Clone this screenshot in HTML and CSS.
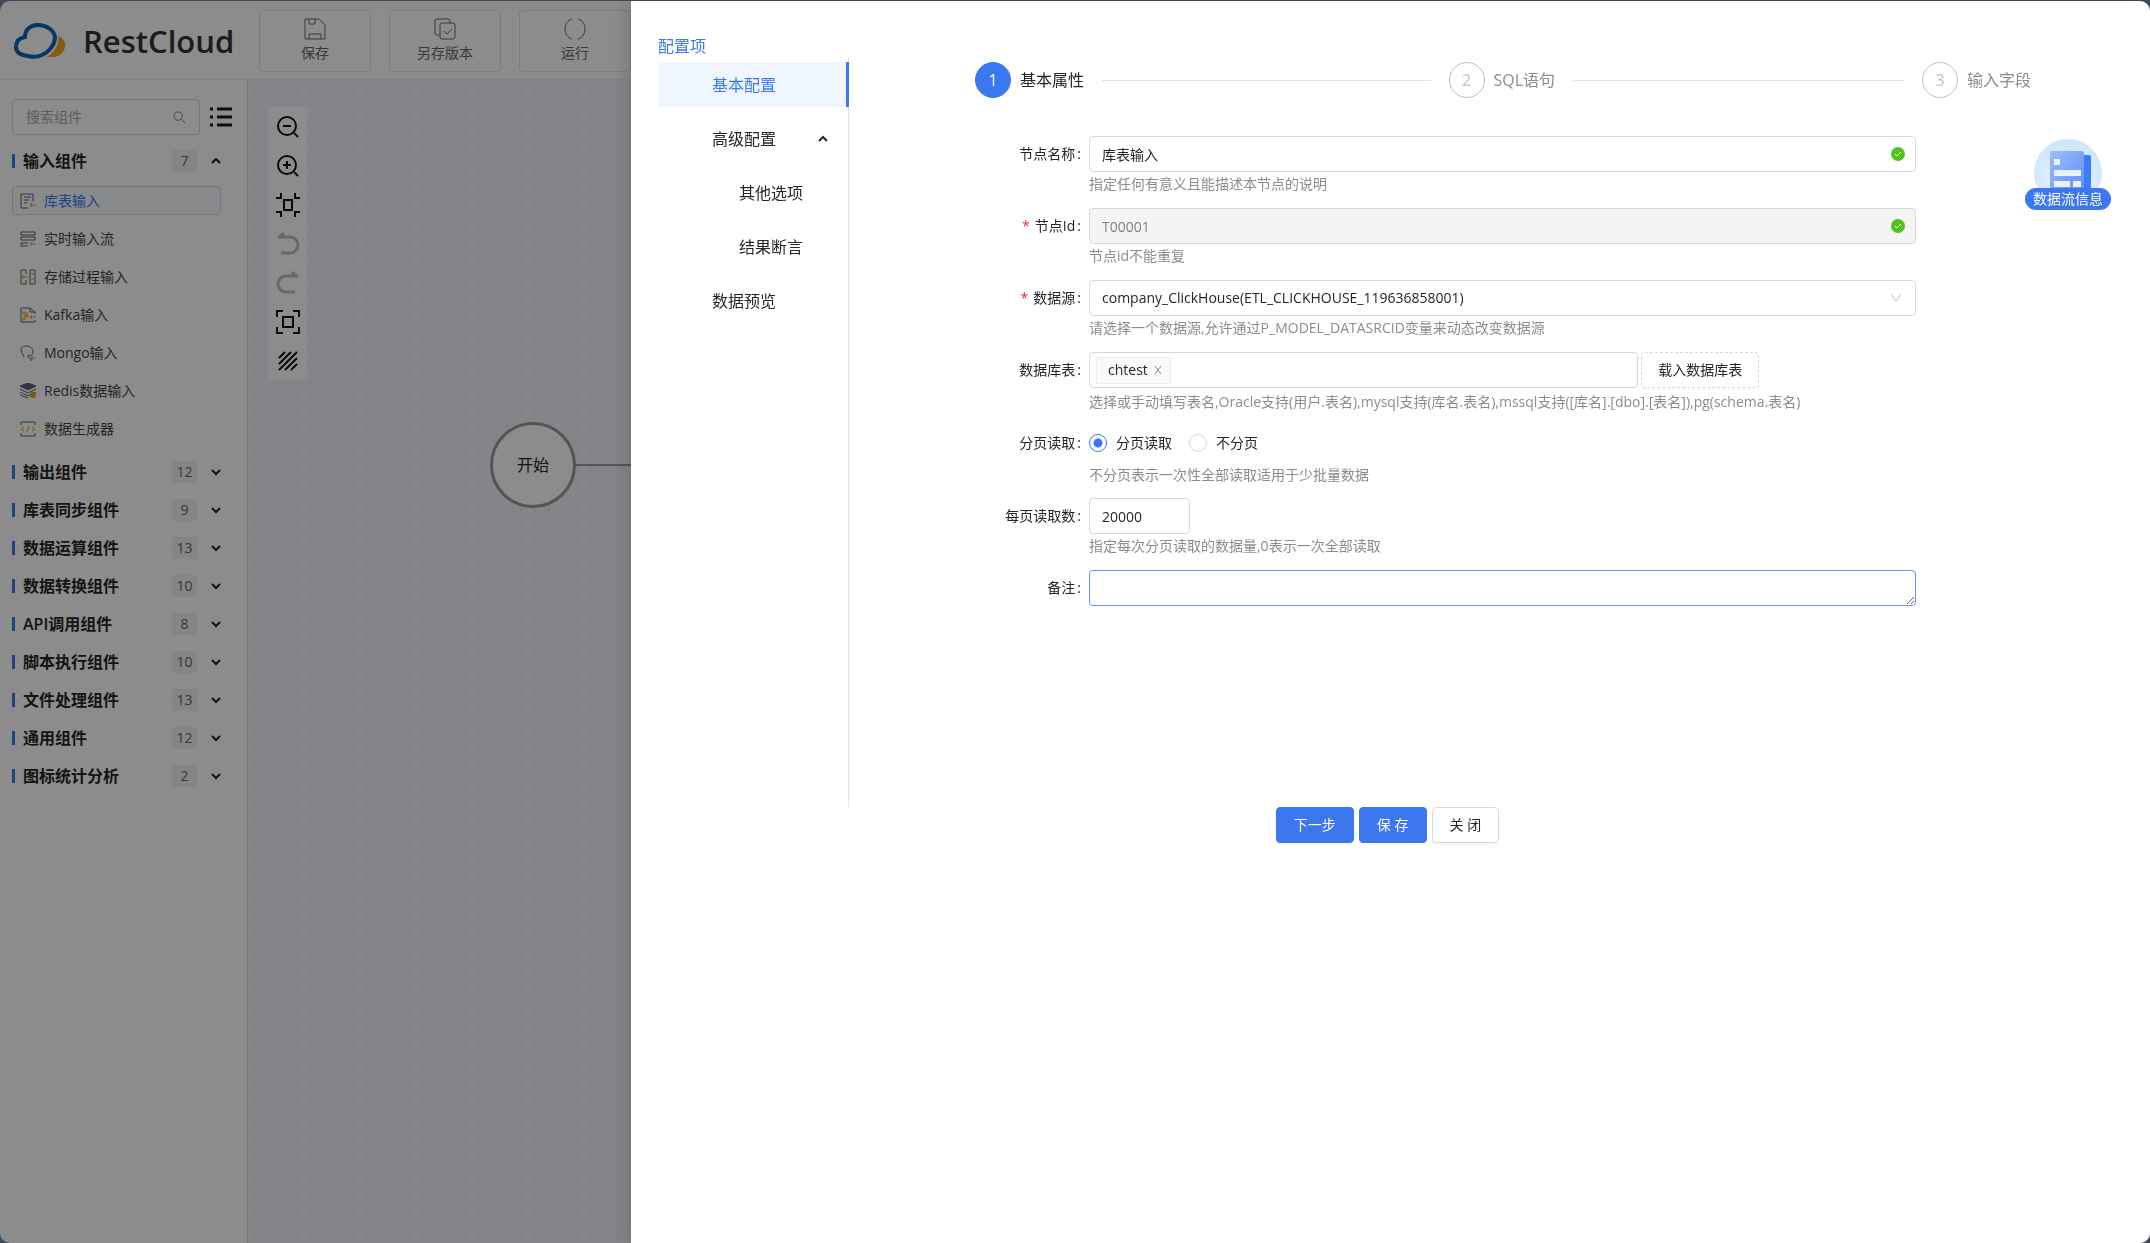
FILE: index.html
```html
<!DOCTYPE html>
<html lang="zh-CN">
<head>
<meta charset="utf-8">
<title>RestCloud</title>
<link rel="stylesheet" href="styles.css">
</head>
<body>
<div class="app">
  <header class="topbar">
    <div class="brand">
      <svg class="brand-mark" viewBox="0 0 54 38" aria-hidden="true">
        <path d="M43 13c7 2 10 7 9 12-1 6-6 10-12 10H28c8-2 15-9 15-22z" fill="#f0a81c"/>
        <path d="M13 15C12 7 18 2 26 2c9 0 16 5 17 13 0 10-7 18-15 19-5 2-10 2-14 1C6 34 2 30 2 25c0-5 4-9 11-10z" fill="#fff" stroke="#fff" stroke-width="5"/>
        <path d="M12 15C12 7 18 3 25 3c8 0 16 5 17 12 0 8-6 15-13 18-4 2-10 2-14 1C7 33 3 30 3 25c0-5 3-9 9-10z" fill="#fff" stroke="#0a66b8" stroke-width="4"/>
      </svg>
      <span class="brand-name">RestCloud</span>
    </div>
    <nav class="actions">
      <button class="action" type="button">
        <svg class="icon-lg" viewBox="0 0 22 22"><path d="M1 1h14l6 6v14H1zM5 1v5h6V1M5 21v-5h12v5"/></svg>
        <span>保存</span>
      </button>
      <button class="action" type="button">
        <svg class="icon-lg" viewBox="0 0 22 22"><path d="M5 17H3a2 2 0 0 1-2-2V3a2 2 0 0 1 2-2h11a2 2 0 0 1 2 2v2"/><rect x="6" y="5" width="15" height="16" rx="2"/><path d="M10 13l3 3 5-5"/></svg>
        <span>另存版本</span>
      </button>
      <button class="action" type="button">
        <svg class="icon-lg" viewBox="0 0 22 22"><path d="M8 1C4 2 1 6 1 11s3 9 7 10M14 1c4 1 7 5 7 10s-3 9-7 10"/></svg>
        <span>运行</span>
      </button>
    </nav>
  </header>
  <div class="workspace">
    <aside class="sidebar">
      <div class="search-row">
        <label class="search">
          <input type="text" placeholder="搜索组件" aria-label="搜索组件">
          <svg class="icon-search" viewBox="0 0 14 14"><circle cx="5.500" cy="5.500" r="4.500"/><path d="M9 9l4 4"/></svg>
        </label>
        <svg class="icon-list" viewBox="0 0 22 20"><path d="M0 2h3M7 2h15M0 10h3M7 10h15M0 18h3M7 18h15"/></svg>
      </div>
      <button class="group" type="button"><span class="group-name">输入组件</span><span class="count">7</span><svg class="chev" viewBox="0 0 10 10"><path d="M1 7l4-4 4 4"/></svg></button>
      <ul class="items">
        <li><a class="item item-active" href="#"><svg class="icon-sm" viewBox="0 0 16 16"><path d="M8 15H1V1h12v7M4 4h7M4 7h5M4 10h3"/><path class="accent" d="M16 12h-6M12 10l-2 2 2 2"/></svg>库表输入</a></li>
        <li><a class="item" href="#"><svg class="icon-sm" viewBox="0 0 16 16"><path d="M1 1h14v3H1zM1 6h14v3H1zM8 15H1v-3h7"/><path class="accent" d="M16 13h-6M12 11l-2 2 2 2"/></svg>实时输入流</a></li>
        <li><a class="item" href="#"><svg class="icon-sm" viewBox="0 0 16 16"><path d="M6 5V1H1v14h5v-4M10 1h5v14h-5z"/><path class="accent" d="M8 8H2M4 6L2 8l2 2M11 5h3M11 10h3"/></svg>存储过程输入</a></li>
        <li><a class="item" href="#"><svg class="icon-sm" viewBox="0 0 16 16"><path d="M15 13v2H1V1h9l5 4v2M10 1v4h5"/><path class="accent" d="M16 10h-6M12 8l-2 2 2 2M3 5h2v2H3zM5 8h3v2H5zM3 11h2v2H3zM7 5v2"/></svg>Kafka输入</a></li>
        <li><a class="item" href="#"><svg class="icon-sm" viewBox="0 0 16 16"><path d="M4 12C2 8 1 6 1 4c0-2 3-3 6-3s6 2 6 6c0 2-1 3-2 4-2-1-4-1-3 1s3 0 3 4"/><path class="accent" d="M16 13h-5M13 11l-2 2 2 2"/></svg>Mongo输入</a></li>
        <li><a class="item" href="#"><svg class="icon-sm" viewBox="0 0 16 16"><path class="solid" d="M8 0l8 3-8 4-8-4z"/><path d="M0 6l8 4 8-4M0 9l8 4 8-4M0 12l8 3"/><circle class="dot" cx="13" cy="12" r="3"/></svg>Redis数据输入</a></li>
        <li><a class="item" href="#"><svg class="icon-sm" viewBox="0 0 16 16"><path d="M1 4V1h14v3M1 12v3h14v-3"/><path class="accent" d="M4 6L1 8l3 2M12 6l3 2-3 2M9 5l-2 6"/></svg>数据生成器</a></li>
      </ul>
      <button class="group" type="button"><span class="group-name">输出组件</span><span class="count">12</span><svg class="chev" viewBox="0 0 10 10"><path d="M1 3l4 4 4-4"/></svg></button>
      <button class="group" type="button"><span class="group-name">库表同步组件</span><span class="count">9</span><svg class="chev" viewBox="0 0 10 10"><path d="M1 3l4 4 4-4"/></svg></button>
      <button class="group" type="button"><span class="group-name">数据运算组件</span><span class="count">13</span><svg class="chev" viewBox="0 0 10 10"><path d="M1 3l4 4 4-4"/></svg></button>
      <button class="group" type="button"><span class="group-name">数据转换组件</span><span class="count">10</span><svg class="chev" viewBox="0 0 10 10"><path d="M1 3l4 4 4-4"/></svg></button>
      <button class="group" type="button"><span class="group-name">API调用组件</span><span class="count">8</span><svg class="chev" viewBox="0 0 10 10"><path d="M1 3l4 4 4-4"/></svg></button>
      <button class="group" type="button"><span class="group-name">脚本执行组件</span><span class="count">10</span><svg class="chev" viewBox="0 0 10 10"><path d="M1 3l4 4 4-4"/></svg></button>
      <button class="group" type="button"><span class="group-name">文件处理组件</span><span class="count">13</span><svg class="chev" viewBox="0 0 10 10"><path d="M1 3l4 4 4-4"/></svg></button>
      <button class="group" type="button"><span class="group-name">通用组件</span><span class="count">12</span><svg class="chev" viewBox="0 0 10 10"><path d="M1 3l4 4 4-4"/></svg></button>
      <button class="group" type="button"><span class="group-name">图标统计分析</span><span class="count">2</span><svg class="chev" viewBox="0 0 10 10"><path d="M1 3l4 4 4-4"/></svg></button>
    </aside>
    <main class="canvas">
      <div class="tools">
        <button type="button" aria-label="缩小"><svg viewBox="0 0 24 24"><circle cx="11" cy="11" r="9"/><path d="M7 11h8M18 18l4 4"/></svg></button>
        <button type="button" aria-label="放大"><svg viewBox="0 0 24 24"><circle cx="11" cy="11" r="9"/><path d="M7 11h8M11 7v8M18 18l4 4"/></svg></button>
        <button type="button" aria-label="适应内容"><svg viewBox="0 0 24 24"><path d="M8 7h8v10H8zM0 5h5V0M24 5h-5V0M0 19h5v5M24 19h-5v5"/></svg></button>
        <button type="button" aria-label="撤销" disabled><svg viewBox="0 0 24 24"><path d="M2 5h12a8 8 0 0 1 0 16H5M8 1L3 5"/></svg></button>
        <button type="button" aria-label="重做" disabled><svg viewBox="0 0 24 24"><path d="M22 5H10a8 8 0 0 0 0 16h9M16 1l5 4"/></svg></button>
        <button type="button" aria-label="适应画布"><svg viewBox="0 0 24 24"><path d="M7 7h10v10H7zM1 7V1h6M17 1h6v6M1 17v6h6M17 23h6v-6"/></svg></button>
        <button type="button" aria-label="网格"><svg viewBox="0 0 24 24"><path d="M3 9l6-6M3 15L15 3M3 21L21 3M9 21L21 9M15 21l6-6"/></svg></button>
      </div>
      <div class="edge"></div>
      <div class="node">开始</div>
    </main>
  </div>
</div>

<div class="mask"></div>

<section class="drawer">
  <div class="drawer-body">
    <nav class="config">
      <h2 class="config-title">配置项</h2>
      <div class="menu">
        <a class="menu-item menu-active" href="#">基本配置</a>
        <a class="menu-item" href="#">高级配置<svg class="chev" viewBox="0 0 10 10"><path d="M1 7l4-4 4 4"/></svg></a>
        <a class="menu-item menu-sub" href="#">其他选项</a>
        <a class="menu-item menu-sub" href="#">结果断言</a>
        <a class="menu-item" href="#">数据预览</a>
      </div>
    </nav>
    <div class="content">
      <ol class="steps">
        <li class="step step-current"><span class="step-no">1</span><span class="step-title">基本属性</span></li>
        <li class="step"><span class="step-no">2</span><span class="step-title">SQL语句</span></li>
        <li class="step"><span class="step-no">3</span><span class="step-title">输入字段</span></li>
      </ol>
      <form class="form">
        <label class="label" for="name">节点名称</label>
        <div class="field">
          <div class="control"><input id="name" class="box" type="text" value="库表输入"><svg class="ok" viewBox="0 0 14 14"><circle cx="7" cy="7" r="7"/><path d="M4 7l2 2 4-4"/></svg></div>
          <p class="hint">指定任何有意义且能描述本节点的说明</p>
        </div>
        <label class="label required" for="nodeid">节点Id</label>
        <div class="field">
          <div class="control"><input id="nodeid" class="box" type="text" value="T00001" disabled><svg class="ok" viewBox="0 0 14 14"><circle cx="7" cy="7" r="7"/><path d="M4 7l2 2 4-4"/></svg></div>
          <p class="hint">节点id不能重复</p>
        </div>
        <label class="label required" for="source">数据源</label>
        <div class="field">
          <div class="control"><select id="source" class="box"><option>company_ClickHouse(ETL_CLICKHOUSE_119636858001)</option></select><svg class="arrow" viewBox="0 0 12 12"><path d="M1 2l5 7 5-7"/></svg></div>
          <p class="hint">请选择一个数据源,允许通过P_MODEL_DATASRCID变量来动态改变数据源</p>
        </div>
        <label class="label" for="tables">数据库表</label>
        <div class="field">
          <div class="table-row">
            <div class="box tags"><span class="tag">chtest<button type="button" class="tag-close" aria-label="移除"><svg viewBox="0 0 8 8"><path d="M1 0l6 8M7 0L1 8"/></svg></button></span><input id="tables" type="text"></div>
            <button class="btn btn-dashed" type="button">载入数据库表</button>
          </div>
          <p class="hint hint-loose">选择或手动填写表名,Oracle支持(用户.表名),mysql支持(库名.表名),mssql支持([库名].[dbo].[表名]),pg(schema.表名)</p>
        </div>
        <span class="label">分页读取</span>
        <div class="field">
          <div class="radios">
            <label><input type="radio" name="paging" checked>分页读取</label>
            <label><input type="radio" name="paging">不分页</label>
          </div>
          <p class="hint hint-loose">不分页表示一次性全部读取适用于少批量数据</p>
        </div>
        <label class="label" for="size">每页读取数</label>
        <div class="field">
          <input id="size" class="box box-short" type="text" value="20000">
          <p class="hint">指定每次分页读取的数据量,0表示一次全部读取</p>
        </div>
        <label class="label" for="remark">备注</label>
        <div class="field"><textarea id="remark" class="box remark" rows="1"></textarea></div>
      </form>
    </div>
  </div>
  <footer class="footer">
    <button class="btn btn-primary" type="button">下一步</button>
    <button class="btn btn-primary" type="button">保 存</button>
    <button class="btn" type="button">关 闭</button>
  </footer>
  <button class="info" type="button">
    <svg viewBox="0 0 68 68" aria-hidden="true">
      <defs>
        <radialGradient id="halo" cx="50%" cy="60%" r="55%"><stop offset="0" stop-color="#f0f4ff"/><stop offset="1" stop-color="#cfe6ff"/></radialGradient>
        <linearGradient id="sheet" x1="0" y1="0" x2="1" y2="1"><stop offset="0" stop-color="#9dbcfb"/><stop offset="1" stop-color="#5c8ff8"/></linearGradient>
      </defs>
      <circle cx="34" cy="34" r="34" fill="url(#halo)"/>
      <rect x="46" y="16" width="11" height="40" rx="2" fill="#3f7bf8"/>
      <rect x="16" y="12" width="34" height="44" rx="2" fill="url(#sheet)"/>
      <path d="M20 20h6v6h-6zM20 31h27v6H20zM20 42h16v6H20zM39 42h8v6h-8z" fill="#e9f0ff"/>
    </svg>
    <span>数据流信息</span>
  </button>
</section>
</body>
</html>
```
FILE: styles.css
```css
* { box-sizing: border-box; }

:root {
  --primary: #3b78f0;
  --text: #262626;
  --muted: #8c8c8c;
  --line: #d9d9d9;
}

html { height: 100%; background: #75879f; }

body {
  margin: 0;
  min-height: 100%;
  font: 14px/22px "Open Sans", "Noto Sans CJK SC", sans-serif;
  color: var(--text);
}

button, input, select, textarea { font: inherit; color: inherit; }
button { padding: 0; border: 0; background: none; }
a { color: inherit; text-decoration: none; }
ul, ol, p, h2 { margin: 0; padding: 0; list-style: none; }
svg { flex: none; fill: none; stroke: currentColor; }

/* Designer behind the drawer */
.app {
  display: flex;
  flex-direction: column;
  min-height: calc(100vh - 1px);
  margin-top: 1px;
  border-radius: 10px;
  background: #fff;
  overflow: hidden;
}

.topbar {
  display: flex;
  align-items: center;
  gap: 24px;
  height: 79px;
  padding: 2px 0 0 13px;
  border-bottom: 1px solid #eef0f4;
}

.brand { display: flex; align-items: center; gap: 16px; width: 222px; }
.brand-mark { width: 54px; height: 38px; stroke: none; }
.brand-name { font: 600 31px/40px "Open Sans", sans-serif; color: #333; }

.actions { display: flex; gap: 18px; }
.action {
  display: flex;
  flex-direction: column;
  align-items: center;
  justify-content: center;
  gap: 2px;
  width: 112px;
  height: 62px;
  border: 1px solid #dbe6fa;
  border-radius: 4px;
  color: #666;
}
.icon-lg { width: 22px; height: 22px; }

.workspace { display: flex; flex: 1; }

.sidebar {
  width: 248px;
  padding: 19px 26px 0 12px;
  border-right: 1px solid #d5d5d5;
}

.search-row { display: flex; align-items: center; gap: 10px; margin-right: -12px; margin-bottom: 7px; }
.search {
  display: flex;
  align-items: center;
  width: 188px;
  height: 36px;
  padding: 0 13px;
  border: 1px solid var(--line);
  border-radius: 4px;
}
.search input { flex: 1; min-width: 0; padding: 0; border: 0; background: none; }
.search input::placeholder { color: #aaa; }
.icon-search { width: 13px; height: 13px; color: #777; }
.icon-list { width: 22px; height: 20px; stroke: #1d1d1d; stroke-width: 3; }

.group { display: flex; align-items: center; width: 100%; height: 38px; }
.group::before { content: ""; width: 3px; height: 14px; margin-right: 8px; background: var(--primary); }
.group-name { flex: 1; font-size: 16px; font-weight: 600; text-align: left; }
.count { width: 25px; margin-right: 14px; background: #f2f2f2; color: #666; text-align: center; }
.chev { width: 10px; height: 10px; stroke: #222; stroke-width: 2; }

.items { display: grid; gap: 9px; padding: 6px 0 10px; }
.item {
  display: flex;
  align-items: center;
  gap: 8px;
  height: 29px;
  padding-left: 7px;
  border: 1px solid transparent;
  border-radius: 4px;
  color: #444;
}
.item-active { border-color: #c3dafa; background: #f8fbff; color: var(--primary); }
.icon-sm { width: 16px; height: 16px; stroke: #59626d; }
.icon-sm .accent { stroke: #f09a12; }
.icon-sm .solid { fill: #59626d; }
.icon-sm .dot { fill: #f09a12; stroke: none; }

.canvas {
  position: relative;
  flex: 1;
  background: #f1f3fa radial-gradient(circle, #e3e5ec 1px, transparent 2px) 0 3px / 14px 14px;
}
.tools { position: absolute; top: 27px; left: 20px; display: grid; width: 39px; background: #fff; }
.tools button { display: grid; place-items: center; height: 39px; color: #111; }
.tools button:disabled { color: #b9c0cd; }
.tools svg { width: 24px; height: 24px; stroke-width: 2; }
.tools button:disabled svg { stroke-width: 3; }
.node {
  position: absolute;
  top: 342px;
  left: 242px;
  width: 86px;
  height: 86px;
  border: 3px solid #999;
  border-radius: 50%;
  background: #fff;
  font-size: 16px;
  line-height: 80px;
  text-align: center;
}
.edge { position: absolute; top: 384px; left: 328px; right: 0; height: 2px; background: #999; }

.mask { position: fixed; inset: 0; background: rgba(0, 0, 0, .45); }

/* Configuration drawer */
.drawer {
  position: absolute;
  top: 1px;
  left: 631px;
  right: 0;
  min-height: calc(100vh - 1px);
  padding: 0 33px 0 27px;
  border-radius: 0 10px 10px 0;
  background: #fff;
  box-shadow: -6px 0 16px rgba(0, 0, 0, .12);
}
.drawer-body { display: flex; }

.config { display: flex; flex-direction: column; width: 191px; padding-top: 34px; }
.config-title { font-size: 16px; font-weight: 400; line-height: 22px; color: var(--primary); }
.menu { display: grid; align-content: start; gap: 9px; min-height: 750px; padding-top: 5px; border-right: 1px solid #e3e3e3; }
.menu-item {
  display: flex;
  align-items: center;
  justify-content: space-between;
  height: 45px;
  padding: 0 20px 0 54px;
  font-size: 16px;
}
.menu-sub { padding-left: 81px; }
.menu-active { margin-right: -1px; border-right: 3px solid var(--primary); background: #eff6ff; color: var(--primary); }

.content { flex: 1; padding: 61px 0 0 126px; }

.steps { display: flex; gap: 18px; margin-right: 86px; }
.step { display: flex; flex: 1; align-items: center; gap: 9px; font-size: 16px; color: var(--muted); }
.step:last-child { flex: none; }
.step:not(:last-child)::after { content: ""; flex: 1; height: 1px; margin-left: 9px; background: #e3e3e3; }
.step-no { width: 36px; height: 36px; border: 1px solid #bfbfbf; border-radius: 50%; line-height: 34px; text-align: center; color: #bfbfbf; }
.step-current { color: var(--text); }
.step-current .step-no { border-color: var(--primary); background: var(--primary); color: #fff; }

.form {
  display: grid;
  grid-template-columns: 106px 1fr;
  column-gap: 8px;
  row-gap: 12px;
  margin: 38px 201px 0 0;
}
.label { line-height: 36px; text-align: right; white-space: nowrap; }
.label::after { content: ":"; margin-left: 2px; }
.required::before { content: "*"; margin-right: 5px; color: #f5222d; }
.control { position: relative; }
.box {
  display: block;
  width: 100%;
  height: 36px;
  padding: 0 12px;
  border: 1px solid var(--line);
  border-radius: 4px;
  background: #fff;
  outline: 0;
  appearance: none;
}
.box:disabled { background: #f4f4f4; color: #808080; }
.box-short { width: 101px; }
.ok { position: absolute; top: 11px; right: 11px; width: 14px; height: 14px; fill: #52c41a; stroke: none; }
.ok path { fill: none; stroke: #fff; }
.arrow { position: absolute; top: 12px; right: 14px; width: 12px; height: 12px; stroke: #bfbfbf; }
.hint { line-height: 24px; color: var(--muted); }
.hint-loose { margin-bottom: -3px; line-height: 28px; }

.table-row { display: grid; grid-template-columns: 2fr 1fr; gap: 3px; justify-items: start; }
.tags { display: flex; align-items: center; padding: 0 6px; }
.tags input { flex: 1; min-width: 0; border: 0; outline: 0; }
.tag { display: flex; align-items: center; gap: 6px; height: 27px; padding: 0 8px 0 11px; border: 1px solid #ececec; border-radius: 2px; background: #fafafa; }
.tag-close { display: flex; }
.tag-close svg { width: 8px; height: 8px; stroke: #888; }

.radios { display: flex; gap: 17px; height: 36px; }
.radios label { display: flex; align-items: center; gap: 9px; }
.radios input { width: 18px; height: 18px; margin: 0; border: 1px solid var(--line); border-radius: 50%; appearance: none; }
.radios input:checked { border-color: var(--primary); background: radial-gradient(circle, var(--primary) 4px, #fff 5px); }
.remark { padding: 6px 12px; border-color: #5e97f5; }

.footer { display: flex; justify-content: center; gap: 5px; }
.btn { height: 36px; padding: 0 17px; border: 1px solid var(--line); border-radius: 4px; background: #fff; box-shadow: 0 2px 0 rgba(0, 0, 0, .02); white-space: nowrap; }
.btn-primary { border-color: var(--primary); background: var(--primary); color: #fff; }
.btn-dashed { padding: 0 16px; border-style: dashed; }

.info { position: absolute; top: 135px; right: 39px; width: 86px; height: 74px; }
.info svg { display: block; width: 68px; height: 68px; margin: 0 auto; stroke: none; }
.info span { position: absolute; left: 0; right: 0; bottom: 0; border-radius: 11px; background: var(--primary); color: #fff; }
```
